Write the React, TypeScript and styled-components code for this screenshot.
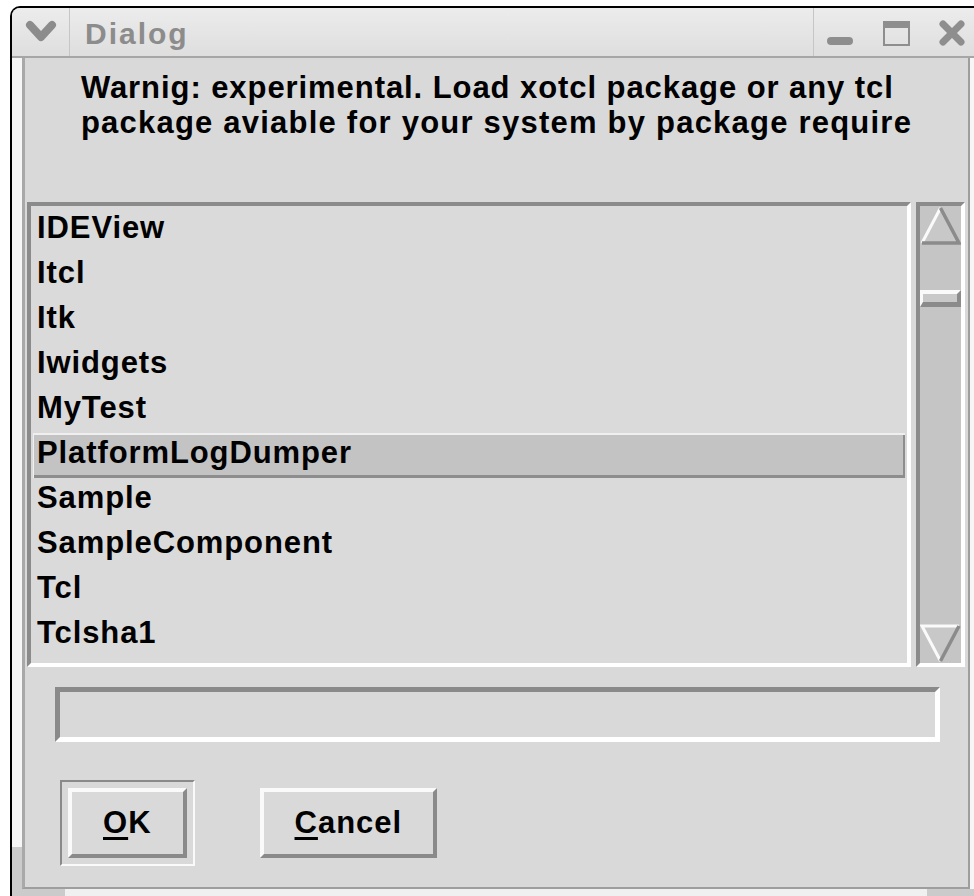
import React from "react";
import styled, { createGlobalStyle } from "styled-components";

const GlobalStyle = createGlobalStyle`
  html, body {
    margin: 0;
    padding: 0;
    background: #ffffff;
  }
  body {
    font-family: "Liberation Sans", Arial, sans-serif;
  }
`;

const packages = [
  "IDEView",
  "Itcl",
  "Itk",
  "Iwidgets",
  "MyTest",
  "PlatformLogDumper",
  "Sample",
  "SampleComponent",
  "Tcl",
  "Tclsha1",
];

const Window = styled.div`
  box-sizing: border-box;
  margin: 6px 0 0 10px;
  width: 964px;
  height: 890px;
  border-top: 2px solid #000;
  border-left: 2px solid #000;
  border-top-left-radius: 10px;
  background: #f3f3f3;
  display: flex;
  flex-direction: column;
  overflow: hidden;
`;

const TitleBar = styled.div`
  box-sizing: border-box;
  height: 50px;
  flex: none;
  display: flex;
  align-items: stretch;
  background: linear-gradient(#ececec, #dedede);
  border-bottom: 2px solid #a6a6a6;
`;

const MenuButton = styled.div`
  width: 57px;
  display: flex;
  align-items: center;
  justify-content: center;
  border-right: 1px solid #c6c6c6;
`;

const Title = styled.div`
  flex: 1;
  display: flex;
  align-items: center;
  padding: 4px 0 0 15px;
  font-size: 30px;
  font-weight: bold;
  letter-spacing: 2px;
  color: #8c8c8c;
`;

const Controls = styled.div`
  display: flex;
  align-items: center;
  gap: 28px;
  padding: 2px 8px 0 12px;
  border-left: 1px solid #c6c6c6;
`;

const Body = styled.div`
  flex: 1;
  display: flex;
  flex-direction: column;
`;

const BodyRow = styled.div`
  flex: 1;
  display: flex;
`;

const SideEdge = styled.div<{ $width: number }>`
  width: ${(p) => p.$width}px;
  flex: none;
  display: flex;
  flex-direction: column;
  background: #f6f6f6;
`;

const EdgeFill = styled.div`
  flex: 1;
`;

const Grip = styled.div<{ $size: number; $horizontal?: boolean }>`
  flex: none;
  background: #cbcbcb;
  ${(p) => (p.$horizontal ? `width: ${p.$size}px;` : `height: ${p.$size}px;`)}
`;

const BottomEdge = styled.div`
  height: 7px;
  flex: none;
  display: flex;
  background: #f0f0f0;
`;

const Content = styled.div`
  flex: 1;
  display: flex;
  flex-direction: column;
  background: #d9d9d9;
  border-left: 3px solid #a9a9a9;
  border-right: 2px solid #9e9e9e;
  border-bottom: 2px solid #9e9e9e;
`;

const Message = styled.div`
  display: flex;
  justify-content: center;
  padding-top: 12px;
`;

const MessageText = styled.div`
  font-size: 31px;
  font-weight: bold;
  line-height: 35px;
  color: #000;
`;

const MessageLine = styled.div<{ $spacing: number }>`
  letter-spacing: ${(p) => p.$spacing}px;
  white-space: nowrap;
`;

const ListArea = styled.div`
  display: flex;
  gap: 5px;
  height: 465px;
  margin: 62px 3px 0 2px;
`;

const ListBox = styled.div`
  box-sizing: border-box;
  flex: 1;
  border: 4px solid;
  border-color: #8b8b8b #ffffff #ffffff #8b8b8b;
  padding: 2px;
  background: #dadada;
  overflow: hidden;
`;

const Row = styled.div<{ $selected?: boolean }>`
  box-sizing: border-box;
  height: 45px;
  padding-left: 4px;
  line-height: 39px;
  font-size: 31px;
  font-weight: bold;
  letter-spacing: 0.9px;
  color: #000;
  white-space: nowrap;
  background: ${(p) => (p.$selected ? "#c3c3c3" : "transparent")};
  box-shadow: ${(p) =>
    p.$selected
      ? "inset 1px 2px 0 #efefef, inset -2px -3px 0 #8d8d8d"
      : "none"};
`;

const ScrollBar = styled.div`
  box-sizing: border-box;
  width: 49px;
  flex: none;
  display: flex;
  flex-direction: column;
  border: 4px solid;
  border-color: #8b8b8b #ffffff #ffffff #8b8b8b;
  background: #c5c5c5;
`;

const Arrow = styled.svg`
  display: block;
  width: 41px;
  height: 40px;
  flex: none;
`;

const Slider = styled.div`
  box-sizing: border-box;
  height: 17px;
  margin-top: 44px;
  flex: none;
  background: #c9c9c9;
  border-style: solid;
  border-width: 4px 4px 5px 3px;
  border-color: #fafafa #8b8b8b #8b8b8b #fafafa;
`;

const Trough = styled.div`
  flex: 1;
`;

const Entry = styled.div`
  box-sizing: border-box;
  height: 55px;
  margin: 20px 28px 0 30px;
  border: 5px solid;
  border-color: #8a8a8a #ffffff #ffffff #8a8a8a;
  background: #d9d9d9;
`;

const ButtonRow = styled.div`
  display: flex;
  gap: 57px;
  margin-top: 38px;
  padding-left: 35px;
`;

const FocusRing = styled.div<{ $active?: boolean }>`
  border: 2px solid;
  border-color: ${(p) =>
    p.$active ? "#8a8a8a #fafafa #fafafa #8a8a8a" : "transparent"};
  padding: 6px;
`;

const Button = styled.button`
  box-sizing: border-box;
  height: 70px;
  padding: 0 31px;
  border: 4px solid;
  border-color: #fafafa #8a8a8a #8a8a8a #fafafa;
  background: #d9d9d9;
  font-family: "Liberation Sans", Arial, sans-serif;
  font-size: 31px;
  font-weight: bold;
  letter-spacing: 1px;
  color: #000;

  u {
    text-decoration-thickness: 3px;
    text-underline-offset: 4px;
  }
`;

const Chevron = () => (
  <svg width="32" height="24" viewBox="0 0 32 24">
    <polyline
      points="5,5 16,17 27,5"
      fill="none"
      stroke="#8c8c8c"
      strokeWidth="8"
      strokeLinecap="round"
      strokeLinejoin="round"
    />
  </svg>
);

const MinimizeIcon = () => (
  <svg width="28" height="28" viewBox="0 0 28 28">
    <rect x="1" y="18" width="26" height="8" rx="4" fill="#8e8e8e" />
  </svg>
);

const MaximizeIcon = () => (
  <svg width="28" height="28" viewBox="0 0 28 28">
    <rect x="1" y="2" width="27" height="7" fill="#8e8e8e" />
    <rect x="2" y="3" width="25" height="23" fill="none" stroke="#8e8e8e" strokeWidth="2" />
  </svg>
);

const CloseIcon = () => (
  <svg width="28" height="28" viewBox="0 0 28 28">
    <g stroke="#8e8e8e" strokeWidth="7" strokeLinecap="round">
      <line x1="5" y1="5" x2="23" y2="23" />
      <line x1="23" y1="5" x2="5" y2="23" />
    </g>
  </svg>
);

const UpArrow = () => (
  <Arrow viewBox="0 0 41 40">
    <polygon points="20.5,2 2,37 39,37" fill="#c8c8c8" />
    <line x1="20.5" y1="2" x2="2" y2="37" stroke="#fafafa" strokeWidth="3" />
    <polyline points="20.5,2 39,37 2,37" fill="none" stroke="#8b8b8b" strokeWidth="3.5" />
  </Arrow>
);

const DownArrow = () => (
  <Arrow viewBox="0 0 41 40">
    <polygon points="2,3 39,3 20.5,38" fill="#c8c8c8" />
    <polyline points="39,3 2,3 20.5,38" fill="none" stroke="#fafafa" strokeWidth="3" />
    <line x1="39" y1="3" x2="20.5" y2="38" stroke="#8b8b8b" strokeWidth="3.5" />
  </Arrow>
);

export default function App() {
  const selected = "PlatformLogDumper";
  return (
    <>
      <GlobalStyle />
      <Window>
        <TitleBar>
          <MenuButton>
            <Chevron />
          </MenuButton>
          <Title>Dialog</Title>
          <Controls>
            <MinimizeIcon />
            <MaximizeIcon />
            <CloseIcon />
          </Controls>
        </TitleBar>
        <Body>
          <BodyRow>
            <SideEdge $width={10}>
              <EdgeFill />
              <Grip $size={42} />
            </SideEdge>
            <Content>
              <Message>
                <MessageText>
                  <MessageLine $spacing={0.93}>
                    Warnig: experimental. Load xotcl package or any tcl
                  </MessageLine>
                  <MessageLine $spacing={1.22}>
                    package aviable for your system by package require
                  </MessageLine>
                </MessageText>
              </Message>
              <ListArea>
                <ListBox>
                  {packages.map((name) => (
                    <Row key={name} $selected={name === selected}>
                      {name}
                    </Row>
                  ))}
                </ListBox>
                <ScrollBar>
                  <UpArrow />
                  <Slider />
                  <Trough />
                  <DownArrow />
                </ScrollBar>
              </ListArea>
              <Entry />
              <ButtonRow>
                <FocusRing $active>
                  <Button>
                    <u>O</u>K
                  </Button>
                </FocusRing>
                <FocusRing>
                  <Button>
                    <u>C</u>ancel
                  </Button>
                </FocusRing>
              </ButtonRow>
            </Content>
            <SideEdge $width={4}>
              <EdgeFill />
            </SideEdge>
          </BodyRow>
          <BottomEdge>
            <Grip $size={53} $horizontal />
            <EdgeFill />
            <Grip $size={47} $horizontal />
          </BottomEdge>
        </Body>
      </Window>
    </>
  );
}
